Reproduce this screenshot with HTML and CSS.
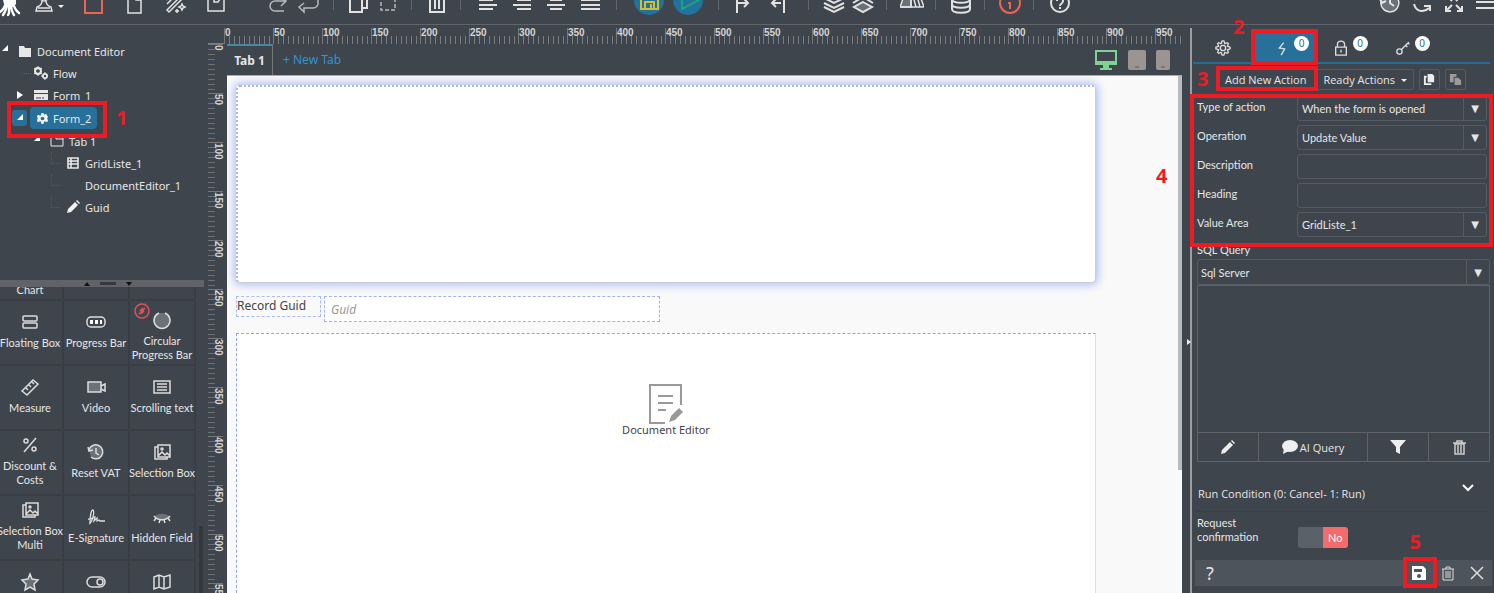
FILE: index.html
```html
<!DOCTYPE html>
<html lang="en">
<head>
  <meta charset="UTF-8">
  <meta name="viewport" content="width=device-width, initial-scale=1.0">
  <title>Document Editor</title>
  <link rel="stylesheet" href="styles.css">
</head>
<body>

  <header class="toolbar">
    <svg class="logo" viewBox="0 0 24 24"><path d="M3 0h13v4l-3 3H7L4 4z" fill="#fff"/><path d="M6 2C5 7 3 10 0 12M7 3C7 9 5 12 3 15M9 4v9l-1 2M11 4c0 5 1 8 3 11M13 2c1 6 3 9 6 11" fill="none" stroke="#fff" stroke-width="2.4" stroke-linecap="round"/></svg>
    <button class="tool tool-menu" aria-label="User"><svg viewBox="0 0 24 24"><circle cx="12" cy="6" r="4"/><path d="M10 10c0 4-2 5-5 6l-1 4h16l-1-4c-3-1-5-2-5-6M6 17h12"/></svg><i class="caret"></i></button>
    <div class="tool-group files">
      <button class="tool" aria-label="Form"><svg viewBox="0 0 24 24" class="red"><path d="M4 4h17v18H4z" stroke-width="2"/></svg></button>
      <button class="tool" aria-label="New"><svg viewBox="0 0 24 24"><path d="M6 3h8l5 5v14H6zM14 3v6h5"/></svg></button>
      <button class="tool" aria-label="Wizard"><svg viewBox="0 0 24 24"><path d="M4 19L18 5l2 2L6 21zM4 13l8-8M3 9l4-4"/><path d="M19 13l1 2 2 1-2 1-1 2-1-2-2-1 2-1zM14 18v4M12 20h4"/></svg></button>
      <button class="tool" aria-label="Open"><svg viewBox="0 0 24 24"><path d="M4 20V6h6v5h4l2-3h4v12z"/></svg></button>
    </div>
    <div class="tool-group history">
      <button class="tool" aria-label="Redo"><svg viewBox="0 0 24 24" class="dim"><path d="M18 20H9a5 5 0 0 1 0-10h10M15 6l5 4-5 5"/></svg></button>
      <button class="tool" aria-label="Return"><svg viewBox="0 0 24 24" class="dim"><path d="M7 12l-5 4 5 5v-4h9a5 5 0 0 0 5-6V8"/></svg></button>
    </div>
    <span class="sep"></span>
    <button class="tool" aria-label="Copy"><svg viewBox="0 0 24 24"><path d="M3 3h12v18H3zM15 5h5v12h-5" stroke-width="2"/></svg></button>
    <button class="tool" aria-label="Select"><svg viewBox="0 0 24 24" class="dim"><path d="M5 3h14v16H5z" stroke-dasharray="4 2"/></svg></button>
    <span class="sep"></span>
    <button class="tool" aria-label="Delete"><svg viewBox="0 0 24 24"><path d="M5 5v16h14V5M10 7v11M14 7v11M3 5h18" stroke-width="2"/></svg></button>
    <span class="sep"></span>
    <div class="tool-group aligns">
      <button class="tool" aria-label="Align left"><svg viewBox="0 0 24 24"><path d="M3 9h14M3 14h18M3 18h14" stroke-width="2"/></svg></button>
      <button class="tool" aria-label="Align right"><svg viewBox="0 0 24 24"><path d="M7 9h14M3 14h18M7 18h14" stroke-width="2"/></svg></button>
      <button class="tool" aria-label="Align center"><svg viewBox="0 0 24 24"><path d="M6 9h12M3 14h18M6 18h12" stroke-width="2"/></svg></button>
      <button class="tool" aria-label="Justify"><svg viewBox="0 0 24 24"><path d="M3 9h19M3 14h19M3 18h19" stroke-width="2"/></svg></button>
    </div>
    <span class="sep"></span>
    <div class="tool-group round">
      <button class="tool" aria-label="Save"><svg viewBox="0 0 30 30"><circle cx="15" cy="15" r="15" fill="#2272a0" stroke="none"/><path d="M7 7h14l3 3v14H7zM11 24v-7h9v7M17 19v4" stroke="#d6bb35" stroke-width="2"/></svg></button>
      <button class="tool" aria-label="Run"><svg viewBox="0 0 30 30"><circle cx="15" cy="15" r="15" fill="#2272a0" stroke="none"/><path d="M9 4v20l17-9z" stroke="#1fa373" stroke-width="2"/></svg></button>
    </div>
    <span class="sep"></span>
    <div class="tool-group indents">
      <button class="tool" aria-label="Indent"><svg viewBox="0 0 24 24"><path d="M5 2v20M5 12h11M12 8l4 4-4 4" stroke-width="2"/></svg></button>
      <button class="tool" aria-label="Outdent"><svg viewBox="0 0 24 24"><path d="M17 2v20M14 12H5M9 8l-4 4 4 4" stroke-width="2"/></svg></button>
    </div>
    <span class="sep"></span>
    <button class="tool" aria-label="To front"><svg viewBox="0 0 24 24"><path d="M2 7l10 5 10-5M2 12l10 5 10-5M2 16l10 5 10-5" stroke-width="2"/></svg></button>
    <button class="tool" aria-label="To back"><svg viewBox="0 0 24 24"><path d="M2 12l10-6 10 6" stroke-width="2"/><path d="M12 11l9 5-9 5-9-5z" fill="#6b7178" stroke-width="2"/></svg></button>
    <span class="sep"></span>
    <button class="tool" aria-label="Guides"><svg viewBox="0 0 24 24"><path d="M0 16L4 5h7v11z" fill="#6b7178"/><path d="M0 16h24L20 5M11 5v11M13 5l3 11M17 5l3 11"/></svg></button>
    <span class="sep"></span>
    <button class="tool" aria-label="Database"><svg viewBox="0 0 24 24"><path d="M3 4v14c0 5 18 5 18 0V4M3 8c0 5 18 5 18 0M3 13c0 5 18 5 18 0" stroke-width="2"/></svg></button>
    <span class="sep"></span>
    <button class="tool" aria-label="Info"><svg viewBox="0 0 24 24" class="red"><circle cx="12" cy="12" r="10" stroke-width="2"/><path d="M10 12h2v6" stroke-width="2"/></svg></button>
    <span class="sep"></span>
    <button class="tool" aria-label="Help"><svg viewBox="0 0 24 24"><circle cx="13" cy="12" r="9" stroke-width="2"/><path d="M10 10c0-4 6-4 6 0 0 3-3 2-3 5M13 16v2" stroke-width="2"/></svg></button>
    <div class="tool-group window">
      <button class="tool" aria-label="History"><svg viewBox="0 0 24 24"><path d="M3 10a9 9 0 1 0 3-5" fill="#6b7178"/><path d="M12 7v5l4 3M2 8l2 4 4-2" stroke-width="2"/></svg></button>
      <button class="tool" aria-label="Refresh"><svg viewBox="0 0 24 24"><path d="M4 13c2 8 10 9 15 4M20 20v-5h-6M4 9c3-6 10-7 14-3" stroke-width="2"/></svg></button>
      <button class="tool" aria-label="Full screen"><svg viewBox="0 0 24 24"><path d="M10 14l-6 6M4 15v5h5M14 14l6 6M20 15v5h-5M10 10L4 4M4 9V4h5M14 10l6-6M20 9V4h-5" stroke-width="2"/></svg></button>
      <button class="tool" aria-label="Menu"><svg viewBox="0 0 24 24"><path d="M2 5h22M2 11h22M2 17h22" stroke-width="2"/></svg></button>
    </div>
  </header>

  <main class="workspace">
    <aside class="sidebar">
      <nav class="tree">
        <ul>
          <li>
            <div class="node"><i class="arrow open"></i><svg viewBox="0 0 14 14"><path d="M1 2h5l1 2h6v9H1z" fill="#e8e8e8"/></svg><span>Document Editor</span></div>
            <ul>
              <li><div class="node"><i class="arrow none"></i><svg viewBox="0 0 14 14"><circle cx="4" cy="5" r="3" stroke="#e8e8e8" stroke-width="2" fill="none"/><circle cx="11" cy="10" r="2" stroke="#e8e8e8" stroke-width="2" fill="none"/><path d="M4 0v10M0 2l8 6M0 8l8-6M11 6v8M7 10h7" stroke="#e8e8e8" stroke-width="1"/><circle cx="4" cy="5" r="1.6" fill="#3f454c"/><circle cx="11" cy="10" r="1.2" fill="#3f454c"/></svg><span>Flow</span></div></li>
              <li><div class="node"><i class="arrow closed"></i><svg viewBox="0 0 14 14"><path d="M0 2h14v3H0zM0 6h14v6H0z" fill="#e8e8e8"/><path d="M2 10h5M8 10h2" stroke="#3f454c"/></svg><span>Form_1</span></div></li>
              <li>
                <div class="node selected"><i class="arrow open"></i><a href="#form2"><svg viewBox="0 0 14 14"><path d="M6 1h2l1 2 2-1 1 2 1 1-1 2 1 2-1 2-3-1-1 3H6l-1-3-3 1-1-2 1-2-1-2 1-2 3 1z" fill="#f2f2f2"/><circle cx="7" cy="7" r="2" fill="#26709a"/></svg><span>Form_2</span></a></div>
                <ul>
                  <li>
                    <div class="node"><i class="arrow open"></i><svg viewBox="0 0 14 14"><path d="M1 12V3h5v2h7v7zM6 3h7v2" fill="none" stroke="#e8e8e8"/></svg><span>Tab 1</span></div>
                    <ul class="leaves">
                      <li><div class="node"><i class="arrow none"></i><svg viewBox="0 0 14 14"><path d="M2 2h10v10H2zM5 2v10M2 5h10M2 8h10" fill="none" stroke="#e8e8e8" stroke-width="1.6"/></svg><span>GridListe_1</span></div></li>
                      <li><div class="node"><i class="arrow none"></i><svg viewBox="0 0 14 14"></svg><span>DocumentEditor_1</span></div></li>
                      <li><div class="node"><i class="arrow none"></i><svg viewBox="0 0 14 14"><path d="M1 13l1-4 7-7 3 3-7 7zM10 1l1-1 3 3-1 1z" fill="#f2f2f2"/></svg><span>Guid</span></div></li>
                    </ul>
                  </li>
                </ul>
              </li>
            </ul>
          </li>
        </ul>
        <div class="mark mark-form"></div>
        <b class="step step-1">1</b>
      </nav>
      <div class="splitter"><i class="tri up"></i><i class="grip"></i><i class="tri down"></i></div>
      <div class="palette">
        <div class="items">
          <button class="item low"><span>Chart</span></button>
          <button class="item" aria-label="Empty"></button>
          <button class="item" aria-label="Empty"></button>
          <button class="item"><svg viewBox="0 0 20 20"><rect x="3" y="4" width="14" height="5" rx="1"/><rect x="3" y="11" width="14" height="5" rx="1"/></svg><span>Floating Box</span></button>
          <button class="item"><svg viewBox="0 0 20 20"><rect x="1" y="5" width="18" height="10" rx="4"/><path d="M4 8h3v4H4zM9 8h3v4H9zM14 8h2v4h-2z" fill="#fff" stroke="none"/></svg><span>Progress Bar</span></button>
          <button class="item low"><svg viewBox="0 0 20 20"><path d="M7 3a8 8 0 1 0 6 0" class="shade"/></svg><span>Circular Progress Bar</span><svg class="badge-off" viewBox="0 0 18 18"><circle cx="9" cy="9" r="7"/><path d="M6 12l6-6M7 9l3-3M8 12l3-3"/></svg></button>
          <button class="item"><svg viewBox="0 0 20 20"><path d="M2 14L13 3l5 4L7 18zM6 11l2 2M9 8l2 2M12 5l2 2"/></svg><span>Measure</span></button>
          <button class="item"><svg viewBox="0 0 20 20"><path d="M2 5h13v10H2z" class="shade"/><path d="M15 9l4-2v7l-4-2"/></svg><span>Video</span></button>
          <button class="item"><svg viewBox="0 0 20 20"><path d="M2 4h16v12H2zM5 7h10M5 10h10M5 13h10"/></svg><span>Scrolling text</span></button>
          <button class="item"><svg viewBox="0 0 20 20"><circle cx="6" cy="6" r="2"/><circle cx="14" cy="14" r="2"/><path d="M4 17L16 3"/></svg><span>Discount &amp; Costs</span></button>
          <button class="item"><svg viewBox="0 0 20 20"><path d="M3 8a7 7 0 1 1 2 7" class="shade"/><path d="M10 6v5l3 2M2 5l1 4 4-1"/></svg><span>Reset VAT</span></button>
          <button class="item"><svg viewBox="0 0 20 20"><path d="M6 3h12v12H6zM6 5H3v12h12v-2M6 14l4-4 3 3 2-2 3 3"/><circle cx="10" cy="7" r="1"/></svg><span>Selection Box</span></button>
          <button class="item"><svg viewBox="0 0 20 20"><path d="M6 3h12v12H6zM6 5H3v12h12v-2M6 14l4-4 3 3 2-2 3 3"/><circle cx="10" cy="7" r="1"/></svg><span>Selection Box Multi</span></button>
          <button class="item"><svg viewBox="0 0 20 20"><path d="M3 17C6 16 9 5 7 3 5 3 4 9 4 17M2 12c4 1 5-2 7-2l-1 4 3-3v3l2-1 1 1h5" stroke-width="1.3"/></svg><span>E-Signature</span></button>
          <button class="item"><svg viewBox="0 0 20 20"><path d="M3 9c4-3 10-3 14 0-4 4-10 4-14 0z" fill="#6b7178" stroke="none"/><path d="M2 9c4 5 12 5 16 0M4 11l-2 3M8 13l-1 3M12 13l1 3M16 11l2 3"/></svg><span>Hidden Field</span></button>
          <button class="item" aria-label="Rating"><svg viewBox="0 0 20 20"><path d="M10 2l2 5 6 1-4 4 1 6-5-3-5 3 1-6-4-4 6-1z" class="shade"/></svg><span></span></button>
          <button class="item" aria-label="Switch"><svg viewBox="0 0 20 20"><rect x="1" y="5" width="18" height="10" rx="5"/><circle cx="14" cy="10" r="3"/></svg><span></span></button>
          <button class="item" aria-label="Map"><svg viewBox="0 0 20 20"><path d="M2 5l5-2 5 2 6-2v12l-6 2-5-2-5 2zM7 3v12M12 5v12"/></svg><span></span></button>
        </div>
        <div class="scroll-thumb"></div>
      </div>
    </aside>

    <section class="editor">
      <div class="corner"></div>
      <div class="ruler ruler-x" id="rulerX"></div>
      <div class="ruler ruler-y" id="rulerY"></div>
      <div class="stage">
        <div class="tabs">
          <button class="tab">Tab 1</button>
          <button class="new-tab">+ New Tab</button>
          <div class="devices">
            <button aria-label="Desktop"><svg width="24" height="22" viewBox="0 0 24 22"><path d="M2 2h20v12H2z" fill="none" stroke="#82d194" stroke-width="2"/><path d="M1 12h22v4H1zM9 16h6v3h3v2H6v-2h3z" fill="#82d194"/></svg></button>
            <button aria-label="Tablet"><svg width="18" height="22" viewBox="0 0 18 22"><rect y="1" width="18" height="20" rx="2" fill="#9a9592"/><path d="M7 18h4" stroke="#5d5a58"/></svg></button>
            <button aria-label="Phone"><svg width="14" height="22" viewBox="0 0 14 22"><rect y="1" width="14" height="20" rx="2" fill="#9a9592"/><path d="M5 18h4" stroke="#5d5a58"/></svg></button>
          </div>
        </div>
        <div class="canvas">
          <div class="grid-box"></div>
          <div class="guid-row">
            <label for="guid">Record Guid</label>
            <input type="text" id="guid" placeholder="Guid">
          </div>
          <div class="doc-box">
            <svg width="34" height="40" viewBox="0 0 34 40" fill="none" stroke="#999" stroke-width="2"><path d="M16 39H1V1h31v20M9 12h15M9 19h15M9 26h8"/><path d="M20 38l2-6 8-8 4 4-8 8z" fill="#999" stroke="none"/></svg>
            <span>Document Editor</span>
          </div>
          <div class="canvas-thumb"></div>
        </div>
      </div>
    </section>

    <aside class="panel">
      <i class="collapse"></i>
      <div class="panel-tabs">
        <button aria-label="Settings"><svg viewBox="0 0 18 18"><path d="M8 1h2l1 3 3-1 1 1-1 3 3 1v2l-3 1 1 3-1 1-3-1-1 3H8l-1-3-3 1-1-1 1-3-3-1V8l3-1-1-3 1-1 3 1z"/><circle cx="9" cy="9" r="3"/></svg></button>
        <button class="active" aria-label="Actions"><svg viewBox="0 0 18 18"><path d="M11 3L6 9l6 1-4 7"/></svg><span class="count">0</span></button>
        <button aria-label="Locks"><svg viewBox="0 0 18 18"><path d="M3 8h12v9H3zM5 8V5c0-5 8-5 8 0v3M9 11v3"/></svg><span class="count">0</span></button>
        <button aria-label="Keys"><svg viewBox="0 0 18 18"><circle cx="5" cy="13" r="3"/><path d="M7 11l8-8 1 2M12 6l2 2"/></svg><span class="count">0</span></button>
      </div>
      <div class="action-bar">
        <button>Add New Action</button>
        <button>Ready Actions <i class="caret"></i></button>
        <button class="small" aria-label="Copy"><svg viewBox="0 0 14 14"><path d="M5 1h5l2 2v7H5z" fill="#eee"/><path d="M4 4H2v8h6v-1" fill="none" stroke="#eee" stroke-width="2"/></svg></button>
        <button class="small" aria-label="Paste"><svg viewBox="0 0 14 14"><path d="M1 1h7v3H5v6H1zM6 5h4l3 3v5H6z" fill="#9b9b9b"/></svg></button>
      </div>
      <form class="props">
        <label for="type">Type of action</label>
        <div class="select"><select id="type"><option>When the form is opened</option></select></div>
        <label for="operation">Operation</label>
        <div class="select"><select id="operation"><option>Update Value</option></select></div>
        <label for="description">Description</label>
        <input type="text" id="description">
        <label for="heading">Heading</label>
        <input type="text" id="heading">
        <label for="area">Value Area</label>
        <div class="select"><select id="area"><option>GridListe_1</option></select></div>
      </form>
      <div class="query">
        <label for="server">SQL Query</label>
        <div class="select"><select id="server"><option>Sql Server</option></select></div>
        <textarea aria-label="SQL text"></textarea>
        <div class="query-tools">
          <button aria-label="Edit"><svg viewBox="0 0 16 16"><path d="M1 15l1-4 8-8 3 3-8 8zM11 2l1-1 3 3-1 1z" fill="#eee"/></svg></button>
          <button><svg viewBox="0 0 16 16"><ellipse cx="8" cy="7" rx="8" ry="6" fill="#eee"/><path d="M2 9l-1 6 6-3z" fill="#eee"/></svg>AI Query</button>
          <button aria-label="Filter"><svg viewBox="0 0 16 16"><path d="M0 1h16l-6 7v7l-4-2V8z" fill="#eee"/></svg></button>
          <button aria-label="Clear"><svg viewBox="0 0 16 16"><path d="M4 5h9v10H4zM2 4h13M6 4V2h5v2M7 6v8M10 6v8" fill="none" stroke="#ccc" stroke-width="1.5"/></svg></button>
        </div>
      </div>
      <button class="condition">Run Condition (0: Cancel- 1: Run)<svg viewBox="0 0 14 14"><path d="M2 4l5 5 5-5" fill="none" stroke="#fff" stroke-width="2"/></svg></button>
      <div class="confirm">
        <label for="confirm">Request confirmation</label>
        <input type="checkbox" id="confirm">
        <label class="switch" for="confirm">No</label>
      </div>
      <footer class="panel-footer">
        <button class="help" aria-label="Help">?</button>
        <button aria-label="Save"><svg viewBox="0 0 16 16"><path d="M1 1h11l3 3v11H1zM3 4v3h8V4z" fill="#fff" fill-rule="evenodd"/><circle cx="8" cy="11" r="2" fill="#4e545b"/></svg></button>
        <button aria-label="Delete"><svg viewBox="0 0 16 16"><path d="M3 4v11h10V4M2 4h12M6 4V2h4v2M6 6v7M8 6v7M10 6v7" fill="none" stroke="#ddd"/></svg></button>
        <button aria-label="Close"><svg viewBox="0 0 16 16"><path d="M2 2l12 12M14 2L2 14" fill="none" stroke="#ddd" stroke-width="1.5"/></svg></button>
      </footer>
      <div class="mark mark-tab"></div>
      <div class="mark mark-add"></div>
      <div class="mark mark-props"></div>
      <div class="mark mark-save"></div>
      <b class="step step-2">2</b>
      <b class="step step-3">3</b>
      <b class="step step-4">4</b>
      <b class="step step-5">5</b>
    </aside>
  </main>

  <script>
    function fillRuler(id, count) {
      const ruler = document.getElementById(id);
      for (let i = 0; i < count; i++) {
        const mark = document.createElement('span');
        mark.textContent = i * 50;
        ruler.appendChild(mark);
      }
    }

    fillRuler('rulerX', 20);
    fillRuler('rulerY', 12);
  </script>

</body>
</html>
```
FILE: styles.css
```css
* {
  box-sizing: border-box;
}

body {
  margin: 0;
  height: 100vh;
  display: flex;
  flex-direction: column;
  overflow: hidden;
  background-color: #3f454c;
  color: #e6e6e6;
  font-family: "Noto Sans", "Open Sans", sans-serif;
  font-size: 12px;
}

button, input, select, textarea {
  font: inherit;
  color: inherit;
  background: none;
  border: none;
  border-radius: 0;
  padding: 0;
  margin: 0;
}

button {
  cursor: pointer;
}

a {
  color: inherit;
  text-decoration: none;
}

ul {
  list-style: none;
  margin: 0;
  padding: 0;
}

/* Toolbar */
.toolbar {
  display: flex;
  flex: none;
  height: 25px;
  border-bottom: 1px solid #5f656b;
}

.logo {
  width: 24px;
  height: 24px;
}

.tool {
  display: flex;
  flex: none;
  justify-content: center;
  width: 29px;
  height: 24px;
}

.tool svg {
  flex: none;
  width: 24px;
  height: 24px;
  margin-top: -9px;
  fill: none;
  stroke: #e2e2e2;
  stroke-width: 1.5;
}

.tool svg.dim {
  stroke: #b5b8bb;
}

.tool svg.red {
  stroke: #ee6450;
}

.tool-menu {
  width: 48px;
}

.tool-menu .caret {
  margin: 5px 0 0 2px;
}

.caret {
  display: inline-block;
  border: 3px solid transparent;
  border-top-color: #eee;
  border-bottom: none;
}

.tool-group {
  display: flex;
}

.files .tool {
  width: 41px;
}

.history {
  margin-left: 26px;
}

.history .tool {
  width: 31px;
}

.aligns .tool {
  width: 34px;
}

.round {
  padding: 0 2px;
}

.round .tool {
  width: 39px;
}

.round svg {
  width: 30px;
  height: 30px;
  margin-top: -15px;
}

.indents {
  gap: 6px;
  padding-right: 6px;
}

.sep {
  width: 1px;
  height: 10px;
  margin: 0 10px 0 9px;
  background-color: #62676c;
}

.window {
  margin-left: auto;
  margin-right: -8px;
}

.window .tool {
  width: 32px;
}

.workspace {
  flex: 1;
  min-height: 0;
  display: grid;
  grid-template-columns: 204px minmax(0, 1fr) 304px;
  grid-template-rows: minmax(0, 1fr);
}

/* Tree */
.sidebar {
  display: flex;
  flex-direction: column;
  min-height: 0;
}

.tree {
  position: relative;
  flex: none;
  height: 255px;
  padding-top: 15px;
  font-size: 11px;
}

.tree ul ul {
  padding-left: 16px;
}

.node {
  display: flex;
  align-items: center;
  height: 22px;
}

.node svg {
  width: 14px;
  height: 14px;
  margin-right: 5px;
}

.arrow {
  flex: none;
  width: 18px;
  height: 14px;
  display: flex;
}

.arrow.open::before {
  content: "";
  margin: 1px 0 0 2px;
  border: 3px solid transparent;
  border-right-color: #fff;
  border-bottom-color: #fff;
  height: 0;
}

.arrow.closed::before {
  content: "";
  margin: 3px 0 0 1px;
  border: 4px solid transparent;
  border-left: 6px solid #fff;
  border-right: none;
  height: 0;
}

.arrow.none::before {
  content: "";
  width: 9px;
  margin: 7px 0 0 6px;
  border-top: 1px dotted #575d63;
}

.leaves .arrow.none {
  height: 22px;
}

.leaves .arrow.none::before {
  margin: 0 0 0 3px;
  height: 11px;
  border: dotted #50565c;
  border-width: 0 0 1px 1px;
}

.node.selected {
  height: 24px;
  margin-left: -4px;
}

.selected .arrow {
  width: 15px;
  height: 16px;
  margin-right: 3px;
  border-radius: 3px;
  background-color: #26709a;
}

.selected .arrow::before {
  margin: 4px 0 0 5px;
}

.selected a {
  display: flex;
  align-items: center;
  height: 22px;
  padding: 0 6px;
  border-radius: 4px;
  background-color: #26709a;
}

.selected svg {
  width: 13px;
  height: 13px;
  margin-right: 4px;
}

.splitter {
  flex: none;
  display: flex;
  align-items: center;
  justify-content: center;
  gap: 10px;
  height: 7px;
  padding-left: 12px;
  background-color: #606468;
}

.tri {
  border: 3px solid transparent;
}

.tri.up {
  border-bottom: 4px solid #111;
  border-top: none;
}

.tri.down {
  border-top: 4px solid #111;
  border-bottom: none;
}

.grip {
  width: 16px;
  height: 3px;
  background-color: #36393d;
}

/* Component palette */
.palette {
  position: relative;
  flex: 1;
  min-height: 0;
  overflow: hidden;
}

.items {
  display: grid;
  grid-template-columns: repeat(3, 66px);
  grid-auto-rows: 65px;
  margin: -51px 0 0 -2px;
}

.item {
  position: relative;
  display: flex;
  flex-direction: column;
  align-items: center;
  justify-content: center;
  gap: 4px;
  padding-bottom: 3px;
  border: solid #383e44;
  border-width: 0 2px 2px 0;
  font-family: Lato, sans-serif;
  font-size: 11px;
  line-height: 14px;
}

.item.low {
  justify-content: flex-end;
  padding-bottom: 2px;
}

.item > svg {
  flex: none;
  width: 20px;
  height: 20px;
  fill: none;
  stroke: #dcdcdc;
  stroke-width: 1.5;
}

.item span {
  min-height: 14px;
  margin: 0 -4px;
}

.item .shade {
  fill: #6b7178;
}

.item .badge-off {
  position: absolute;
  left: 3px;
  top: 1px;
  width: 18px;
  height: 18px;
  stroke: #e0525a;
}

.scroll-thumb {
  position: absolute;
  right: 1px;
  bottom: 0;
  width: 4px;
  height: 67px;
  background-color: #32373d;
}

/* Rulers */
.editor {
  display: grid;
  grid-template-columns: 21px minmax(0, 1fr);
  grid-template-rows: 19px minmax(0, 1fr);
  padding-left: 4px;
}

.corner {
  border: solid #777e85;
  border-width: 0 1px 1px 0;
  margin: 3px 4px 0 0;
}

.ruler {
  display: flex;
  overflow: hidden;
  font: bold 10px/10px "Liberation Sans", sans-serif;
  color: #d5d5d5;
}

.ruler span {
  flex: none;
}

.ruler-x {
  margin: 3px 6px 0 -5px;
}

.ruler-x span {
  width: 49px;
  border-left: 1px solid #777;
  background: repeating-linear-gradient(90deg, transparent 0 4px, #7a7d80 4px 5px) 0 8px no-repeat;
}

.ruler-y {
  flex-direction: column;
}

.ruler-y span {
  writing-mode: vertical-rl;
  height: 49px;
  width: 15px;
  border-top: 1px solid #777;
  background: repeating-linear-gradient(transparent 0 4px, #6c7074 4px 5px) 0 0 / 7px 100% no-repeat;
}

/* Canvas */
.stage {
  display: flex;
  flex-direction: column;
  min-width: 0;
  min-height: 0;
  margin: 0 8px 0 -2px;
}

.tabs {
  display: flex;
  flex: none;
  height: 32px;
  font-size: 12px;
  border-bottom: 1px solid #a9abad;
}

.tab {
  width: 46px;
  font-weight: bold;
  border-top: 2px solid #4b86a0;
  border-right: 1px solid #777;
}

.new-tab {
  margin-left: 10px;
  color: #3592cf;
}

.devices {
  display: flex;
  align-items: center;
  gap: 10px;
  margin-left: auto;
  margin-right: 12px;
}

.devices svg {
  display: block;
}

.canvas {
  position: relative;
  flex: 1;
  min-height: 0;
  display: flex;
  flex-direction: column;
  padding: 9px 86px 0 9px;
  background-color: #f9f9f9;
  color: #444;
  overflow: hidden;
}

.grid-box {
  flex: none;
  height: 198px;
  background-color: #fff;
  border: 2px dotted #a9b9ee;
  border-right: 1px solid #ccd;
  border-bottom: 1px solid #ccd;
  border-radius: 4px;
  box-shadow: 0 0 8px 2px #aebdf5;
}

.guid-row {
  display: flex;
  align-items: flex-start;
  gap: 3px;
  margin: 13px 0 11px;
}

.guid-row label {
  width: 85px;
  height: 21px;
  line-height: 17px;
  border: 1px dashed #a9bbf0;
}

.guid-row input {
  width: 336px;
  height: 26px;
  padding: 0 6px;
  background-color: #fff;
  border: 1px dashed #9fb2ea;
}

.guid-row input::placeholder {
  font-style: italic;
  color: #999;
}

.doc-box {
  flex: 1;
  display: flex;
  flex-direction: column;
  align-items: center;
  padding-top: 50px;
  background-color: #fff;
  border: 1px dashed #8fa5e8;
  border-right: 1px solid #ddd;
  border-bottom: none;
  font-size: 11px;
  line-height: 12px;
}

.canvas-thumb {
  position: absolute;
  right: 0;
  top: 0;
  width: 4px;
  height: 394px;
  background-color: #bbb;
}

/* Properties panel */
.panel {
  position: relative;
  display: flex;
  flex-direction: column;
  margin-top: 3px;
  padding: 4px 4px 0 5px;
  border-left: 2px solid #9b9fa3;
}

.collapse {
  position: absolute;
  left: -5px;
  top: 311px;
  border: 3px solid transparent;
  border-left: 4px solid #eee;
  border-right: none;
}

.panel-tabs {
  display: flex;
  height: 32px;
  margin-left: -4px;
  border-bottom: 2px solid #246c92;
}

.panel-tabs button {
  display: flex;
  align-items: center;
  justify-content: center;
  width: 60px;
  padding-top: 1px;
}

.panel-tabs .active {
  width: 65px;
  padding-left: 12px;
  background-color: #26709a;
}

.panel-tabs .active + button {
  width: 64px;
}

.panel-tabs svg {
  width: 16px;
  height: 16px;
  fill: none;
  stroke: #ddd;
  stroke-width: 1.5;
}

.count {
  width: 15px;
  height: 15px;
  margin: -8px 0 0 4px;
  border-radius: 50%;
  background-color: #fff;
  color: #26709a;
  font-size: 10px;
  line-height: 15px;
}

.action-bar {
  display: flex;
  gap: 5px;
  margin: 5px 0 6px 19px;
  font-family: "Open Sans", sans-serif;
  font-size: 11px;
}

.action-bar button {
  height: 21px;
  border: 1px solid #555b61;
  border-radius: 2px;
  padding: 0 6px;
  white-space: nowrap;
}

.action-bar button:first-child {
  padding: 0 8px;
  margin-right: -4px;
}

.action-bar .caret {
  margin: 0 0 2px 3px;
}

.action-bar .small {
  width: 21px;
  padding: 3px;
}

.action-bar svg {
  display: block;
}

.props, .query, .confirm {
  font-family: Lato, sans-serif;
  font-size: 11px;
}

.props {
  display: grid;
  grid-template-columns: 100px 1fr;
  grid-auto-rows: 25px;
  row-gap: 4px;
  padding-right: 3px;
}

.props label {
  line-height: 22px;
}

.props input, .select {
  border: 1px solid #555b61;
  border-radius: 3px;
  min-width: 0;
}

.select {
  position: relative;
}

.select select {
  appearance: none;
  width: 100%;
  height: 100%;
  padding: 0 4px;
}

.select::after {
  content: "▼";
  position: absolute;
  right: 0;
  top: 0;
  width: 22px;
  height: 100%;
  display: flex;
  align-items: center;
  justify-content: center;
  border-left: 1px solid #555b61;
  font: 10px "DejaVu Sans", sans-serif;
  pointer-events: none;
}

.query {
  display: flex;
  flex-direction: column;
  margin-top: 3px;
}

.query label {
  line-height: 19px;
}

.query .select {
  height: 26px;
}

.query .select select {
  padding: 0 3px;
}

.query textarea {
  height: 148px;
  border: 1px solid #5e6369;
  resize: none;
}

.query-tools {
  display: grid;
  grid-template-columns: 61px 1fr 61px 61px;
  height: 29px;
  border: solid #5e6369;
  border-width: 0 1px 1px 0;
}

.query-tools button {
  display: flex;
  align-items: center;
  justify-content: center;
  gap: 2px;
  border-left: 1px solid #5e6369;
  font-family: "Open Sans", sans-serif;
}

.query-tools svg {
  width: 16px;
  height: 16px;
}

.condition {
  display: flex;
  align-items: center;
  justify-content: space-between;
  height: 50px;
  padding: 14px 15px 0 1px;
  border-bottom: 1px solid #393f45;
  font-family: "Open Sans", sans-serif;
  font-size: 11px;
}

.condition svg {
  width: 14px;
  height: 14px;
  margin-bottom: 12px;
}

.confirm {
  display: flex;
  align-items: flex-start;
  height: 48px;
  padding-top: 4px;
  line-height: 14px;
}

.confirm label:first-child {
  width: 101px;
  padding-right: 30px;
}

.confirm input {
  position: absolute;
  opacity: 0;
}

.switch {
  width: 50px;
  height: 21px;
  margin-top: 11px;
  padding-left: 30px;
  border-radius: 3px;
  line-height: 21px;
  color: #fff;
  background: linear-gradient(90deg, #5b6168 50%, #f26c6c 50%);
}

.panel-footer {
  display: flex;
  align-items: center;
  gap: 5px;
  height: 26px;
  margin: 0 -2px;
  padding: 0 3px;
  background-color: #4e545b;
}

.panel-footer button {
  width: 24px;
  height: 24px;
}

.panel-footer svg {
  display: block;
  width: 16px;
  height: 16px;
  margin: auto;
}

.panel-footer .help {
  margin-right: auto;
  font-size: 18px;
  line-height: 20px;
}

/* Numbered steps */
.mark {
  position: absolute;
  border: 4px solid #ed1c24;
  pointer-events: none;
}

.step {
  position: absolute;
  font: bold 20px/20px "Open Sans", sans-serif;
  color: #ed1c24;
}

.mark-form {
  left: 7px;
  top: 76px;
  width: 100px;
  height: 37px;
}

.mark-tab {
  left: 59px;
  top: 1px;
  width: 67px;
  height: 36px;
}

.mark-add {
  left: 24px;
  top: 38px;
  width: 102px;
  height: 25px;
}

.mark-props {
  left: -2px;
  top: 66px;
  right: 1px;
  height: 153px;
}

.mark-save {
  right: 57px;
  top: 529px;
  width: 34px;
  height: 31px;
}

.step-1 {
  left: 116px;
  top: 83px;
}

.step-2 {
  left: 41px;
  top: -11px;
}

.step-3 {
  left: 5px;
  top: 41px;
}

.step-4 {
  left: -36px;
  top: 138px;
}

.step-5 {
  right: 73px;
  top: 504px;
}
```
